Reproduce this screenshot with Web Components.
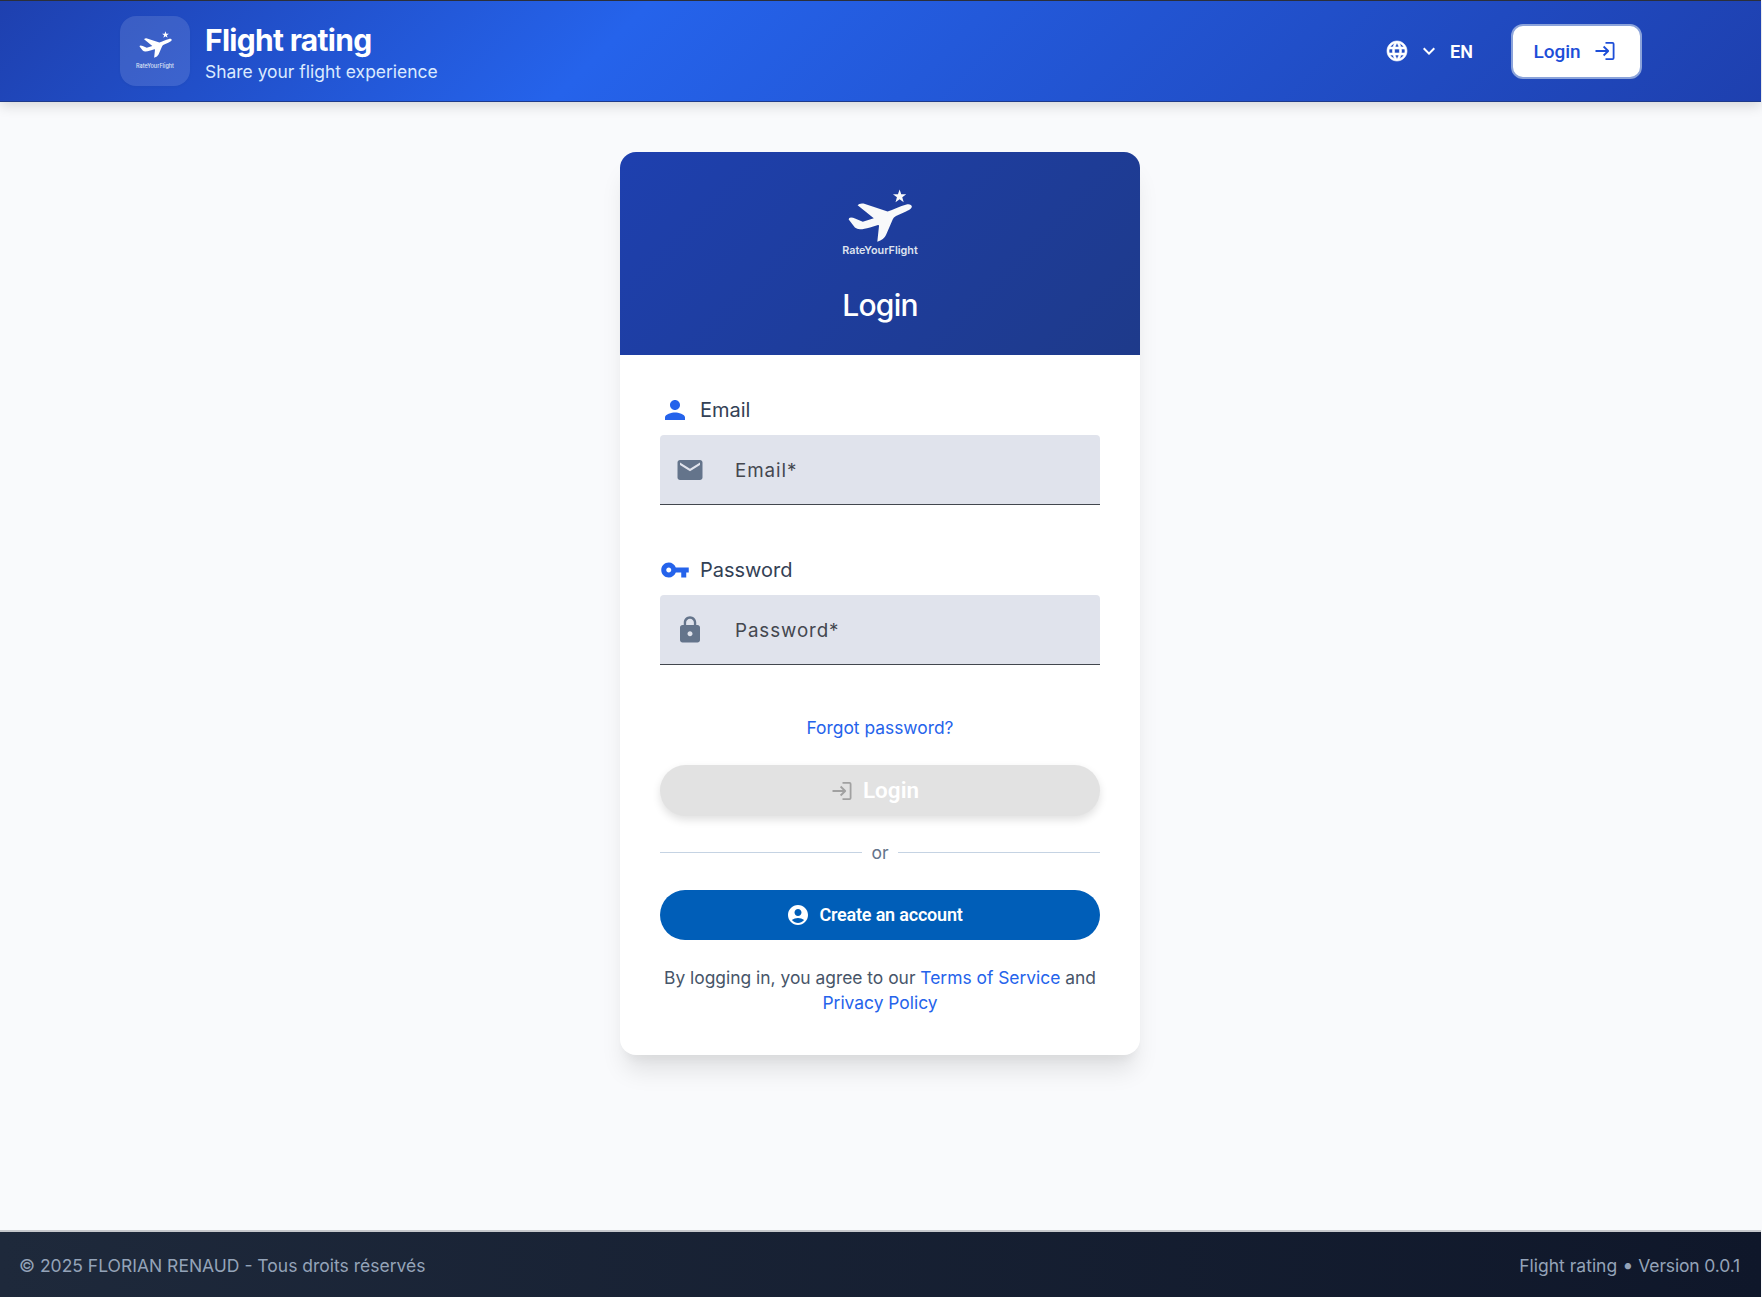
<!DOCTYPE html>
<html><head><meta charset="utf-8"><title>Flight rating</title>
<style>
html,body{margin:0;height:100%}
body{font-family:Inter,"Noto Sans",sans-serif;background:#f9fafc;width:1762px;height:1297px;overflow:hidden}
</style></head><body>
<app-shell></app-shell>
<script>
const planeSvg=(w,h)=>`<svg width="${w}" height="${h}" viewBox="0 0 64 53" fill="currentColor" style="display:block"><path d="M51.6.5 53.25 5.230 58.26 5.340 54.26 8.370 55.71 13.160 51.6 10.300 47.49 13.160 48.94 8.370 44.94 5.340 49.95 5.230Z"/><path d="M9.600 16.200Q11 14 15.500 14.500L39.600 22.400C45 21 52 17 58.500 15.500 62 14.600 64.500 16.500 63.700 18.300 63 20 62 20.700 58 22.500L48 27Q45.500 28.200 44.800 30.300L38 46Q36 50.500 29.300 52.700L31 37Q31 35.700 30 36L22 38.500Q15 40.500 12 40.300 9 40.300 6.900 38.500L.7 30.500Q.5 28.600 3 28.600 5 28.600 7 29.500L14.800 32.700 25.800 29.300Z"/></svg>`;
const icon=(d,s,extra='')=>`<svg width="${s}" height="${s}" viewBox="0 0 24 24" fill="currentColor" style="display:block;flex:none" ${extra}><path d="${d}"/></svg>`;
const loginIcon=`<svg width="24" height="24" viewBox="0 0 24 24" fill="none" stroke="currentColor" stroke-width="1.800" stroke-linejoin="round" style="display:block;flex:none"><path d="M2.500 12H15M10.600 7.500 15.200 12l-4.600 4.500M12.500 3.900H19.500Q20.600 3.900 20.600 5V19Q20.600 20.100 19.500 20.100H12.500"/></svg>`;
const I={
person:'M12 12c2.210 0 4-1.790 4-4s-1.790-4-4-4-4 1.790-4 4 1.790 4 4 4zm0 2c-2.670 0-8 1.340-8 4v2h16v-2c0-2.660-5.330-4-8-4z',
mail:'M20 4H4c-1.100 0-1.990.9-1.990 2L2 18c0 1.100.9 2 2 2h16c1.100 0 2-.9 2-2V6c0-1.100-.9-2-2-2zm0 4-8 5-8-5V6l8 5 8-5v2z',
key:'M12.650 10C11.830 7.670 9.610 6 7 6c-3.310 0-6 2.690-6 6s2.690 6 6 6c2.610 0 4.830-1.670 5.650-4H17v4h4v-4h2v-4H12.650zM7 14c-1.100 0-2-.9-2-2s.9-2 2-2 2 .9 2 2-.9 2-2 2z',
lock:'M18 8h-1V6c0-2.760-2.240-5-5-5S7 3.240 7 6v2H6c-1.100 0-2 .9-2 2v10c0 1.100.9 2 2 2h12c1.100 0 2-.9 2-2V10c0-1.100-.9-2-2-2zm-6 9c-1.100 0-2-.9-2-2s.9-2 2-2 2 .9 2 2-.9 2-2 2zm3.100-9H8.900V6c0-1.710 1.390-3.100 3.100-3.100 1.710 0 3.100 1.390 3.100 3.100v2z',
account:'M12 2C6.480 2 2 6.480 2 12s4.480 10 10 10 10-4.480 10-10S17.520 2 12 2zm0 4c1.930 0 3.500 1.570 3.500 3.500S13.930 13 12 13s-3.500-1.570-3.500-3.500S10.070 6 12 6zm0 14c-2.030 0-4.430-.82-6.140-2.880C7.550 15.800 9.680 15 12 15s4.450.8 6.140 2.120C16.430 19.180 14.030 20 12 20z',
globe:'M11.990 2C6.470 2 2 6.480 2 12s4.470 10 9.990 10C17.520 22 22 17.520 22 12S17.520 2 11.990 2zm6.930 6h-2.950c-.32-1.250-.78-2.450-1.380-3.560 1.840.63 3.370 1.910 4.330 3.560zM12 4.040c.83 1.200 1.480 2.530 1.910 3.960h-3.820c.43-1.430 1.080-2.760 1.910-3.960zM4.260 14C4.100 13.360 4 12.690 4 12s.1-1.360.26-2h3.380c-.08.660-.14 1.320-.14 2s.06 1.340.14 2H4.260zm.82 2h2.950c.32 1.250.78 2.450 1.380 3.560-1.840-.63-3.370-1.900-4.330-3.560zm2.950-8H5.080c.96-1.660 2.490-2.930 4.330-3.560C8.810 5.550 8.350 6.750 8.030 8zM12 19.960c-.83-1.200-1.480-2.530-1.910-3.960h3.820c-.43 1.430-1.080 2.760-1.910 3.960zM14.340 14H9.660c-.09-.66-.16-1.320-.16-2s.07-1.350.16-2h4.680c.09.650.16 1.320.16 2s-.07 1.340-.16 2zm.25 5.560c.6-1.110 1.060-2.310 1.380-3.560h2.950c-.96 1.650-2.490 2.930-4.330 3.560zM16.360 14c.08-.66.14-1.320.14-2s-.06-1.340-.14-2h3.380c.16.640.26 1.310.26 2s-.1 1.360-.26 2h-3.380z',
chev:'M7.410 8.590 12 13.170l4.590-4.580L18 10l-6 6-6-6 1.410-1.410z'
};
function def(name,html){customElements.define(name,class extends HTMLElement{constructor(){super();this.attachShadow({mode:'open'}).innerHTML=typeof html==='function'?html(this):html}})}

def('app-header',`<style>
:host{display:flex;height:102px;box-sizing:border-box;border-top:1px solid #2b2f3a;border-bottom:1px solid #1e3a8a;padding:0 119px 0 120px;align-items:center;justify-content:space-between;color:#fff;position:relative;z-index:1;background:linear-gradient(135deg,#1e40af 0%,#2563eb 35%,#1e40af 100%);box-shadow:0 4px 12px rgba(0,0,0,.14)}
.brand{display:flex;align-items:center;gap:15px}
.logo{width:70px;height:70px;border-radius:16px;background:rgba(255,255,255,.12);display:flex;flex-direction:column;align-items:center;justify-content:center;box-sizing:border-box;padding-bottom:1px;box-shadow:0 1px 3px rgba(0,0,0,.04)}
.logo small{font-size:5.500px;line-height:8px;font-weight:500;color:#dfe5f6;margin-top:4px}
.txt{padding-top:3px}
.t{font-size:30px;line-height:36px;font-weight:700;letter-spacing:-.7px}
.s{font-size:17.450px;line-height:24px;color:#dbeafe;margin-top:2px}
.right{display:flex;align-items:center}
.lang{font:600 18px Roboto,sans-serif;margin-left:9px}
.chev{margin-left:8px}
.btn{display:flex;align-items:center;gap:12px;margin-left:38px;width:131px;height:55px;box-sizing:border-box;padding-right:3px;justify-content:center;background:#fff;color:#1d4ed8;border:2px solid #8ba3da;border-radius:12px;font:500 19px Roboto,sans-serif}
</style>
<div class="brand"><div class="logo">${planeSvg(33,27)}<small>RateYourFlight</small></div><div class="txt"><div class="t">Flight rating</div><div class="s">Share your flight experience</div></div></div>
<div class="right">${icon(I.globe,24,'stroke="currentColor" stroke-width=".6"')}<span class="chev">${icon(I.chev,24)}</span><span class="lang">EN</span><div class="btn">Login ${loginIcon}</div></div>`);

def('text-field',h=>`<style>
:host{display:block}
.l{display:flex;align-items:center;height:32px;font-size:20px;color:#334155;font-weight:400;margin-bottom:9px}
.l i{width:30px;margin-right:10px;display:flex;justify-content:center;color:#2563eb}
.f{height:70px;box-sizing:border-box;background:#e0e3ec;border-bottom:1px solid #43474e;border-radius:4px 4px 0 0;display:flex;align-items:center;padding-left:15px;color:#44474f;font-size:18.800px;letter-spacing:.9px}
.f i{width:30px;height:30px;margin-right:30px;color:#64748b}
.f span{padding-top:1px}
</style><div class="l"><i>${icon(I[h.getAttribute('licon')],30)}</i>${h.getAttribute('label')}</div>
<div class="f"><i>${icon(I[h.getAttribute('ficon')],30)}</i><span>${h.getAttribute('label')}*</span></div>`);

def('pill-button',h=>{const d=h.hasAttribute('disabled');return `<style>
:host{display:flex;border-radius:26px;align-items:center;justify-content:center;font-family:Roboto,sans-serif;color:#fff;gap:9px;padding-right:11px;font-weight:600;${d?'height:51px;background:#e2e2e2;font-size:22.500px;box-shadow:0 4px 8px rgba(0,0,0,.12)':'height:50px;background:#005eb8;font-size:18px;letter-spacing:-.2px'}}
i{${d?'color:#a1a1a1':''}}
span{padding-bottom:2px}
</style><i>${h.getAttribute('icon')==='login'?loginIcon:icon(I[h.getAttribute('icon')],24)}</i><span><slot></slot></span>`});

def('or-divider',`<style>:host{display:flex;align-items:center;gap:9px;color:#64748b;font-size:17.500px;height:24px}
b{flex:1;height:1px;background:#c5d3e3}</style><b></b>or<b></b>`);

def('login-card',`<style>
:host{display:block;width:520px;background:#fff;border-radius:16px;box-shadow:0 20px 25px -5px rgba(0,0,0,.1),0 10px 10px -5px rgba(0,0,0,.04);overflow:hidden}
.h{height:203px;background:linear-gradient(135deg,#1e40af,#1e3a8a);color:#fff;display:flex;flex-direction:column;align-items:center;box-sizing:border-box;padding-top:37px}
.h .pl{color:#f8f9fa}
.h small{font-size:10.800px;line-height:14px;font-weight:600;color:#dfe3ef;margin-top:2px}
.h h2{margin:27px 0 0;font-size:30px;line-height:40px;font-weight:500;letter-spacing:-.8px}
.b{padding:39px 40px 0;height:700px;box-sizing:border-box}
text-field+text-field{margin-top:49px}
.fp{display:block;text-align:center;color:#2563eb;font-size:17.400px;line-height:24px;margin-top:51px}
pill-button[disabled]{margin-top:25px}
or-divider{margin-top:24px}
pill-button.c{margin-top:26px}
.t{font-size:17.400px;line-height:25px;text-align:center;color:#475569;margin-top:25px}
.t a{color:#2563eb}
</style>
<div class="h"><div class="pl">${planeSvg(64,53)}</div><small>RateYourFlight</small><h2>Login</h2></div>
<div class="b">
<text-field label="Email" licon="person" ficon="mail"></text-field>
<text-field label="Password" licon="key" ficon="lock"></text-field>
<a class="fp">Forgot password?</a>
<pill-button disabled icon="login">Login</pill-button>
<or-divider></or-divider>
<pill-button class="c" icon="account">Create an account</pill-button>
<div class="t">By logging in, you agree to our <a>Terms of Service</a> and <a>Privacy Policy</a></div>
</div>`);

def('app-footer',`<style>
:host{display:flex;height:67px;box-sizing:border-box;border-top:2px solid #c6c8cc;align-items:center;justify-content:space-between;padding:2px 21px 0 19px;background:linear-gradient(90deg,#1e293b,#0f172a);color:#94a3b8;font-size:17.500px}
i{font-style:normal;font-size:20px;line-height:0}
u{text-decoration:none;letter-spacing:-.15px}
</style><span>© 2025 FLORIAN RENAUD - Tous droits réservés</span><span>Flight rating <i>•</i> <u>Version 0.0.1</u></span>`);

def('app-shell',`<style>
:host{display:flex;flex-direction:column;width:1761px;height:1297px}
main{flex:1;display:flex;justify-content:center;align-items:flex-start;padding:50px 1px 0 0;box-sizing:border-box}
</style><app-header></app-header><main><login-card></login-card></main><app-footer></app-footer>`);
</script></body></html>
